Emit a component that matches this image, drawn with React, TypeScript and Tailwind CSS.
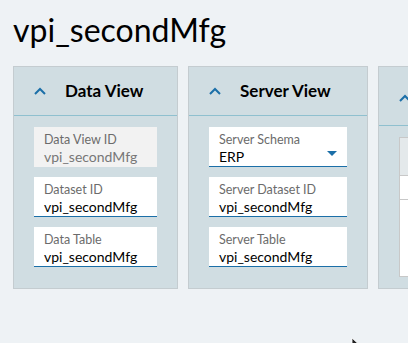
import React from 'react';

const font = { fontFamily: '"Lato", "Noto Sans", sans-serif' };

const Caret: React.FC = () => (
  <svg width="12" height="8" viewBox="0 0 12 8" className="shrink-0">
    <path d="M1 7 L6 2 L11 7" fill="none" stroke="#1b6fa8" strokeWidth="2" />
  </svg>
);

const Field: React.FC<{ label: string; value: string; disabled?: boolean; select?: boolean }> = ({
  label,
  value,
  disabled,
  select,
}) => (
  <div
    className={
      disabled
        ? 'h-10 bg-[#f2f2f2] pl-[10px] pt-[6px]'
        : 'h-10 bg-white border-b border-[#1b6fa8] pl-[10px] pt-[6px] relative'
    }
  >
    <div className="text-[12.5px] leading-[14px] text-[#6b6b6b]">{label}</div>
    <div className={disabled ? 'text-[14px] leading-[19px] text-[#777]' : 'text-[14px] leading-[19px] text-black'}>
      {value}
    </div>
    {select && (
      <svg width="10" height="6" viewBox="0 0 10 6" className="absolute right-[10px] top-[24px]">
        <path d="M0 0 L10 0 L5 5 Z" fill="#1b6fa8" />
      </svg>
    )}
  </div>
);

const Panel: React.FC<{ title: string; width: string; children: React.ReactNode }> = ({ title, width, children }) => (
  <div className={`${width} shrink-0 bg-[#d0dde2] border border-[#c4ccd0] flex flex-col`}>
    <div className="h-[49px] flex items-center pl-5 gap-[19px] border-b border-[#8fc0cf]">
      <Caret />
      <span className="text-[17px] font-bold text-black">{title}</span>
    </div>
    <div className="px-5 pt-[11px] flex flex-col gap-[10px]">{children}</div>
  </div>
);

export default function App() {
  return (
    <div className="w-[408px] h-[343px] overflow-hidden bg-[#eef2f5] relative" style={font}>
      <h1 className="pl-[13px] pt-[10px] h-[66px] text-[32px] leading-[40px] text-black">vpi_secondMfg</h1>
      <div className="flex gap-[10px] pl-[13px] h-[223px]">
        <Panel title="Data View" width="w-[165px]">
          <Field label="Data View ID" value="vpi_secondMfg" disabled />
          <Field label="Dataset ID" value="vpi_secondMfg" />
          <Field label="Data Table" value="vpi_secondMfg" />
        </Panel>
        <Panel title="Server View" width="w-[180px]">
          <Field label="Server Schema" value="ERP" select />
          <Field label="Server Dataset ID" value="vpi_secondMfg" />
          <Field label="Server Table" value="vpi_secondMfg" />
        </Panel>
        <div className="w-[200px] shrink-0 bg-[#d0dde2] border border-[#c4ccd0] flex flex-col">
          <div className="h-[59px] flex items-center pl-5 pt-[3px] border-b border-[#8fc0cf]">
            <Caret />
          </div>
          <div className="pl-5 pt-[11px]">
            <div className="h-[140px] bg-white border border-[#c8c8c8] flex flex-col">
              <div className="h-[38px] bg-[#e4e9eb] border-b border-[#c8c8c8]" />
              <div className="h-[24px] border-b border-[#c8c8c8]" />
            </div>
          </div>
        </div>
      </div>
      <svg width="10" height="14" viewBox="0 0 10 14" className="absolute left-[351px] top-[337px]">
        <path d="M1 1 L1 11 L3.5 8.5 L5.5 13 L7 12.3 L5 8 L8.5 8 Z" fill="#222" stroke="#fff" strokeWidth="0.8" />
      </svg>
    </div>
  );
}
